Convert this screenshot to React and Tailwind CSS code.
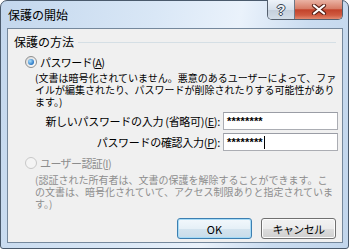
import React from "react";

const jp = { fontFamily: '"Noto Sans CJK JP", "Noto Sans", sans-serif' };

const Radio = ({ checked, disabled }) => (
  <span
    className={`w-[12px] h-[12px] rounded-full border flex items-center justify-center shrink-0 ${
      disabled
        ? "border-[#c8c8c8] bg-[#f4f4f4]"
        : "border-[#8e8f8f] bg-[linear-gradient(135deg,#d8d8d8,#ffffff)]"
    }`}
  >
    {checked && (
      <span className="w-[6px] h-[6px] rounded-full bg-[radial-gradient(circle_at_35%_35%,#a8e0ff,#2a77c4_70%)]" />
    )}
  </span>
);

const Field = ({ label, acc, caret }) => (
  <div className="flex items-center justify-end pr-[4px] h-[18px]">
    <span className="text-[11px] tracking-[-0.3px] text-black leading-[14px]">
      {label}(<span className="underline">{acc}</span>):
    </span>
    <div className="ml-[3px] w-[115px] h-[18px] bg-white border border-[#abadb3] border-t-[#9a9da5] flex items-center pl-[3px]">
      <span
        className="text-[11px] leading-[12px] text-black font-bold tracking-[0.2px]"
        style={{ fontFamily: '"Liberation Sans", sans-serif' }}
      >
        ********
      </span>
      {caret && <span className="ml-[1px] w-px h-[13px] bg-black" />}
    </div>
  </div>
);

export default function App() {
  return (
    <div className="w-[350px] h-[250px] bg-white" style={jp}>
      <div className="w-[349px] h-[249px] flex flex-col rounded-t-[7px] rounded-b-[3px] border border-[#4a5a6c] bg-[linear-gradient(100deg,#c3d7ed_0%,#d9e7f6_40%,#eaf2fb_62%,#cadcf0_80%,#c2d6ec_100%)]">
        {/* Title bar */}
        <div className="h-[27px] flex items-start justify-between pl-[7px] pr-[5px]">
          <span className="mt-[6px] text-[12px] leading-[16px] text-black">保護の開始</span>
          <div className="flex -mt-px rounded-b-[5px] border border-t-0 border-[#55606e] overflow-hidden">
            <div className="w-[27px] h-[19px] flex items-center justify-center border-r border-[#6d7886] bg-[linear-gradient(to_bottom,#eef3f9_0%,#d6e0eb_50%,#c4cfdc_52%,#d3dde8_100%)]">
              <span
                className="text-[14px] leading-[14px] font-bold text-[#eef2f6]"
                style={{
                  fontFamily: '"Liberation Sans", sans-serif',
                  textShadow: "1px 0 0 #3a4654, -1px 0 0 #3a4654, 0 1px 0 #3a4654, 0 -1px 0 #3a4654",
                }}
              >
                ?
              </span>
            </div>
            <div className="w-[47px] h-[19px] flex items-center justify-center bg-[linear-gradient(to_bottom,#eab3a4_0%,#d77d67_45%,#c2432b_52%,#cf5a40_80%,#e28a70_100%)]">
              <svg width="16" height="11" viewBox="0 0 16 11">
                <path d="M3 1.5 L13 9.5 M13 1.5 L3 9.5" stroke="#5a2218" strokeWidth="4.2" strokeLinecap="round" />
                <path d="M3 1.5 L13 9.5 M13 1.5 L3 9.5" stroke="#ffffff" strokeWidth="2.2" strokeLinecap="round" />
              </svg>
            </div>
          </div>
        </div>

        {/* Client area */}
        <div className="flex-1 pl-[6px] pr-[5px] pb-[5px]">
          <div className="h-full border border-[#75889c] bg-[#f0f0f0] flex flex-col">
            {/* Group header */}
            <div className="mt-[6px] ml-[6px] mr-[6px] h-[14px] flex items-center">
              <span className="text-[12px] leading-[14px] text-black">保護の方法</span>
              <span className="flex-1 ml-[4px] h-px bg-[#d5dfe5]" />
            </div>

            {/* Password radio */}
            <div className="mt-[6px] h-[14px] flex items-center pl-[17px]">
              <Radio checked />
              <span className="ml-[3px] text-[11px] tracking-[-0.6px] leading-[14px] text-black">
                パスワード(<span className="underline">A</span>)
              </span>
            </div>

            <div className="mt-[3px] pl-[27px] text-[10px] leading-[12px] text-black whitespace-nowrap">
              <div>(文書は暗号化されていません。悪意のあるユーザーによって、ファ</div>
              <div>イルが編集されたり、パスワードが削除されたりする可能性があり</div>
              <div>ます。)</div>
            </div>

            <div className="mt-[4px] flex flex-col gap-[3px]">
              <Field label="新しいパスワードの入力 (省略可)" acc="E" />
              <Field label="パスワードの確認入力" acc="P" caret />
            </div>

            {/* User auth radio */}
            <div className="mt-[5px] h-[14px] flex items-center pl-[17px]">
              <Radio disabled />
              <span className="ml-[3px] text-[11px] tracking-[-0.6px] leading-[14px] text-[#8d8d8d]">
                ユーザー認証(<span className="underline">I</span>)
              </span>
            </div>

            <div className="mt-[4px] pl-[27px] text-[10px] leading-[12px] text-[#8d8d8d] whitespace-nowrap">
              <div>(認証された所有者は、文書の保護を解除することができます。こ</div>
              <div>の文書は、暗号化されていて、アクセス制限ありと指定されていま</div>
              <div>す。)</div>
            </div>

            {/* Buttons */}
            <div className="mt-[8px] flex justify-end gap-[9px] pr-[6px]">
              <button className="w-[75px] h-[21px] rounded-[3px] border border-[#3c7fb1] shadow-[inset_0_0_0_1px_#a6dbf7] bg-[linear-gradient(to_bottom,#f2f8fc_0%,#e6f0f7_50%,#d4e4ef_51%,#c8dce9_100%)] text-[11px] leading-[14px] text-black">
                OK
              </button>
              <button className="w-[75px] h-[21px] rounded-[3px] border border-[#707070] shadow-[inset_0_0_0_1px_#fcfcfc] bg-[linear-gradient(to_bottom,#f2f2f2_0%,#ebebeb_50%,#dddddd_51%,#cfcfcf_100%)] text-[11px] tracking-[-0.6px] leading-[14px] text-black">
                キャンセル
              </button>
            </div>
          </div>
        </div>
      </div>
    </div>
  );
}
